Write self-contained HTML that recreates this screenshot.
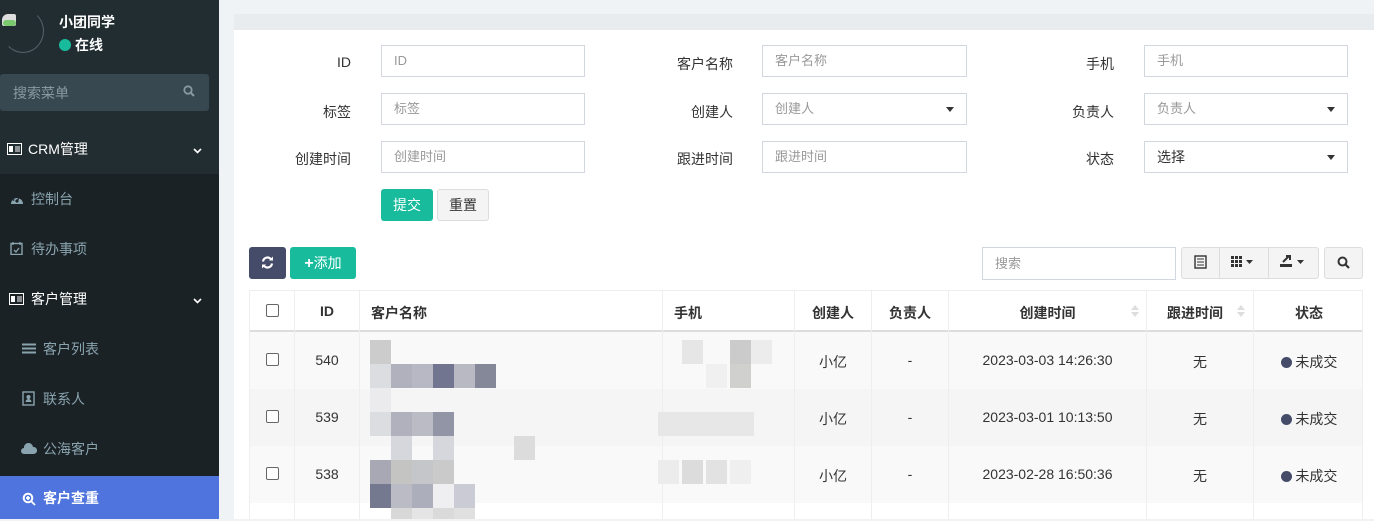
<!DOCTYPE html>
<html><head><meta charset="utf-8">
<style>
*{margin:0;padding:0;box-sizing:border-box}
body{width:1374px;height:519px;overflow:hidden;background:#f0f3f6;font-family:"Liberation Sans","Noto Sans CJK SC",sans-serif;font-size:14px;color:#333;position:relative}
.a{position:absolute}
#side{left:0;top:0;width:219px;height:519px;background:#1a2226}
.lbl{text-align:right;width:120px;font-size:14px;color:#333}
.inp{border:1px solid #d2d6de;background:#fff;height:32px;width:204px;padding:0 12px;line-height:30px;color:#999;font-size:13px}
.caret{position:absolute;right:12px;top:13px;width:0;height:0;border-left:4px solid transparent;border-right:4px solid transparent;border-top:5px solid #333}
.btn{height:32px;line-height:32px;text-align:center;border-radius:3px;font-size:14px}
.cb{width:13px;height:13px;border:1px solid #666;border-radius:2px;background:#fff;position:absolute}
.m{position:absolute;width:21px;height:24px}
.menu{position:absolute;left:0;width:219px;height:50px;line-height:50px;font-size:14px}
</style></head><body>
<div id="side" class="a">
 <div class="a" style="left:0;top:0;width:219px;height:172px;background:#222d32"></div>
 <div class="a" style="left:2px;top:9px;width:42px;height:44px;border-radius:50%;border:1px solid #55636a;border-top-color:transparent;border-left-color:transparent"></div>
 <div class="a" style="left:2px;top:14px;width:14px;height:12px;background:#ddd;border-radius:6px 2px 2px 2px"></div>
 <div class="a" style="left:3px;top:20px;width:13px;height:6px;background:#7bc96f;border-radius:3px"></div>
 <div class="a" style="left:59px;top:12px;color:#fff;font-weight:bold;font-size:14px">小团同学</div>
 <div class="a" style="left:59px;top:39px;width:12px;height:12px;border-radius:50%;background:#18bc9c"></div>
 <div class="a" style="left:75px;top:35px;color:#fff;font-weight:bold;font-size:14px">在线</div>
 <div class="a" style="left:0;top:74px;width:209px;height:37px;background:#374850;border-radius:3px"></div>
 <div class="a" style="left:13px;top:83px;color:#8a999f;font-size:14px">搜索菜单</div>
 <svg class="a" style="left:183px;top:85px" width="12" height="12" viewBox="0 0 12 12"><circle cx="5" cy="5" r="3.7" fill="none" stroke="#8a999f" stroke-width="1.8"/><path d="M8 8l3 3" stroke="#8a999f" stroke-width="2"/></svg>
 <div class="menu" style="top:124px;background:#222d32;color:#fff"><svg class="a" style="left:7px;top:19px" width="15" height="12" viewBox="0 0 15 12"><rect x=".5" y=".5" width="14" height="11" fill="none" stroke="#fff"/><rect x="2" y="3" width="4" height="6" fill="#fff"/><path d="M8 4h5M8 6h5M8 8h5" stroke="#fff"/></svg><span class="a" style="left:28px">CRM管理</span><svg class="a" style="left:193px;top:24px" width="9" height="6"><path d="M1 1l3.5 3.5L8 1" stroke="#fff" stroke-width="1.6" fill="none"/></svg></div>
 <div class="menu" style="top:174px;color:#8aa4af"><svg class="a" style="left:10px;top:19px" width="14" height="12" viewBox="0 0 14 12"><path d="M1 11A6 6 0 1 1 13 11Z" fill="#8aa4af"/><circle cx="7" cy="8" r="1.6" fill="#1a2226"/><path d="M7 8L9.5 4" stroke="#1a2226" stroke-width="1.2"/><circle cx="3.5" cy="7" r=".9" fill="#1a2226"/><circle cx="5" cy="4" r=".9" fill="#1a2226"/></svg><span class="a" style="left:31px">控制台</span></div>
 <div class="menu" style="top:224px;color:#8aa4af"><svg class="a" style="left:10px;top:17px" width="13" height="14" viewBox="0 0 13 14"><rect x="1" y="2.5" width="11" height="11" fill="none" stroke="#8aa4af" stroke-width="1.4"/><path d="M3 1v3M10 1v3M4 9l2 2 3-4" stroke="#8aa4af" stroke-width="1.3" fill="none"/></svg><span class="a" style="left:31px">待办事项</span></div>
 <div class="menu" style="top:274px;color:#fff"><svg class="a" style="left:8px;top:19px" width="17" height="12" viewBox="0 0 15 12"><rect x=".5" y=".5" width="14" height="11" fill="none" stroke="#fff"/><rect x="2" y="3" width="4" height="6" fill="#fff"/><path d="M8 4h5M8 6h5M8 8h5" stroke="#fff"/></svg><span class="a" style="left:31px">客户管理</span><svg class="a" style="left:193px;top:24px" width="9" height="6"><path d="M1 1l3.5 3.5L8 1" stroke="#fff" stroke-width="1.6" fill="none"/></svg></div>
 <div class="menu" style="top:324px;color:#8aa4af"><svg class="a" style="left:22px;top:19px" width="14" height="11"><path d="M0 1.5h14M0 5.5h14M0 9.5h14" stroke="#8aa4af" stroke-width="2"/></svg><span class="a" style="left:43px">客户列表</span></div>
 <div class="menu" style="top:374px;color:#8aa4af"><svg class="a" style="left:22px;top:17px" width="13" height="15" viewBox="0 0 13 15"><rect x="1" y="1" width="11" height="13" fill="none" stroke="#8aa4af" stroke-width="1.4"/><circle cx="6.5" cy="6" r="2" fill="#8aa4af"/><path d="M3.5 11a3 3 0 0 1 6 0z" fill="#8aa4af"/></svg><span class="a" style="left:43px">联系人</span></div>
 <div class="menu" style="top:424px;color:#8aa4af"><svg class="a" style="left:21px;top:19px" width="16" height="11" viewBox="0 0 16 11"><path d="M3 11A3 3 0 0 1 3 5A4.5 4.5 0 0 1 12 4A3.5 3.5 0 0 1 13 11Z" fill="#8aa4af"/></svg><span class="a" style="left:43px">公海客户</span></div>
 <div class="menu" style="top:476px;height:43px;line-height:45px;background:#4f74de;color:#fff"><svg class="a" style="left:22px;top:16px" width="14" height="14" viewBox="0 0 14 14"><circle cx="6" cy="6" r="4.3" fill="none" stroke="#fff" stroke-width="2"/><path d="M9 9l4 4M4 6h4M6 4v4" stroke="#fff" stroke-width="1.8"/></svg><span class="a" style="left:43px;font-weight:bold">客户查重</span></div>
</div>

<div class="a" style="left:234px;top:14px;width:1140px;height:505px;background:#fff"></div>
<div class="a" style="left:234px;top:14px;width:1140px;height:16px;background:#e8ecef"></div>

<div class="a lbl" style="left:231px;top:54px">ID</div>
<div class="a lbl" style="left:231px;top:102px">标签</div>
<div class="a lbl" style="left:231px;top:149px">创建时间</div>
<div class="a lbl" style="left:613px;top:54px">客户名称</div>
<div class="a lbl" style="left:613px;top:102px">创建人</div>
<div class="a lbl" style="left:613px;top:149px">跟进时间</div>
<div class="a lbl" style="left:994px;top:54px">手机</div>
<div class="a lbl" style="left:994px;top:102px">负责人</div>
<div class="a lbl" style="left:994px;top:149px">状态</div>
<div class="a inp" style="left:381px;top:45px">ID</div>
<div class="a inp" style="left:381px;top:93px">标签</div>
<div class="a inp" style="left:381px;top:141px">创建时间</div>
<div class="a inp" style="left:762px;top:45px;width:205px">客户名称</div>
<div class="a inp" style="left:762px;top:93px;width:205px">创建人<i class="caret"></i></div>
<div class="a inp" style="left:762px;top:141px;width:205px">跟进时间</div>
<div class="a inp" style="left:1144px;top:45px">手机</div>
<div class="a inp" style="left:1144px;top:93px">负责人<i class="caret"></i></div>
<div class="a inp" style="left:1144px;top:141px;color:#333;font-size:14px">选择<i class="caret"></i></div>
<div class="a btn" style="left:381px;top:189px;width:52px;background:#18bc9c;color:#fff">提交</div>
<div class="a btn" style="left:437px;top:189px;width:52px;background:#f4f4f4;border:1px solid #ddd;line-height:30px">重置</div>

<div class="a btn" style="left:249px;top:247px;width:37px;height:32px;background:#444c69"><svg style="margin-top:9px" width="13" height="13" viewBox="0 0 13 13"><path d="M2 5.5A4.5 4.5 0 0 1 10.5 4M11 7.5A4.5 4.5 0 0 1 2.5 9" stroke="#fff" stroke-width="2.2" fill="none"/><path d="M8 4.5h4v-4zM5 8.5H1v4z" fill="#fff"/></svg></div>
<div class="a btn" style="left:290px;top:247px;width:66px;background:#18bc9c;color:#fff;font-size:14px"><b style="font-size:16px">+</b>添加</div>
<div class="a inp" style="left:982px;top:247px;width:194px;height:33px;line-height:31px;font-size:13px">搜索</div>
<div class="a" style="left:1181px;top:247px;width:138px;height:32px;border:1px solid #ddd;background:#f4f4f4;border-radius:3px"></div>
<div class="a" style="left:1219px;top:248px;width:1px;height:30px;background:#ddd"></div>
<div class="a" style="left:1268px;top:248px;width:1px;height:30px;background:#ddd"></div>
<svg class="a" style="left:1194px;top:255px" width="13" height="14"><rect x="1" y="1" width="11" height="12" fill="none" stroke="#333" stroke-width="1.4"/><path d="M3 4h7M3 7h7M3 10h7" stroke="#333"/></svg>
<svg class="a" style="left:1231px;top:256px" width="24" height="11"><g fill="#333"><rect x="0" y="0" width="3" height="3"/><rect x="4" y="0" width="3" height="3"/><rect x="8" y="0" width="3" height="3"/><rect x="0" y="4" width="3" height="3"/><rect x="4" y="4" width="3" height="3"/><rect x="8" y="4" width="3" height="3"/><rect x="0" y="8" width="3" height="3"/><rect x="4" y="8" width="3" height="3"/><rect x="8" y="8" width="3" height="3"/><path d="M15 4h7l-3.5 4z"/></g></svg>
<svg class="a" style="left:1280px;top:254px" width="27" height="13"><g fill="#333"><rect x="0" y="10" width="12" height="3"/><path d="M3 8L9 2M6 2h4v4" stroke="#333" stroke-width="2" fill="none"/><path d="M17 6h7l-3.5 4z"/></g></svg>
<div class="a" style="left:1324px;top:247px;width:39px;height:32px;border:1px solid #ddd;background:#f4f4f4;border-radius:3px"></div>
<svg class="a" style="left:1337px;top:256px" width="13" height="13"><circle cx="5.5" cy="5.5" r="4" fill="none" stroke="#333" stroke-width="2"/><path d="M8.5 8.5l3.5 3.5" stroke="#333" stroke-width="2.2"/></svg>

<div class="a" style="left:249px;top:290px;width:1114px;height:229px;border:1px solid #eee;border-bottom:none;overflow:hidden">
 <div class="a" style="left:0;top:0;width:1114px;height:41px;background:#fff;border-bottom:2px solid #ddd"></div>
 <div class="a" style="left:0;top:41px;width:1114px;height:57px;background:#f9f9f9"></div>
 <div class="a" style="left:0;top:98px;width:1114px;height:57px;background:#f5f5f5"></div>
 <div class="a" style="left:0;top:155px;width:1114px;height:57px;background:#f9f9f9"></div>
 <div class="a" style="left:0;top:212px;width:1114px;height:20px;background:#fff"></div>
 <div class="a" style="left:44px;top:0;width:1px;height:229px;background:#eee"></div>
 <div class="a" style="left:109px;top:0;width:1px;height:229px;background:#eee"></div>
 <div class="a" style="left:412px;top:0;width:1px;height:229px;background:#eee"></div>
 <div class="a" style="left:544px;top:0;width:1px;height:229px;background:#eee"></div>
 <div class="a" style="left:621px;top:0;width:1px;height:229px;background:#eee"></div>
 <div class="a" style="left:698px;top:0;width:1px;height:229px;background:#eee"></div>
 <div class="a" style="left:896px;top:0;width:1px;height:229px;background:#eee"></div>
 <div class="a" style="left:1003px;top:0;width:1px;height:229px;background:#eee"></div>
 <div class="cb" style="left:16px;top:13px"></div>
 <div class="a" style="left:45px;width:64px;top:12px;text-align:center;font-weight:bold">ID</div>
 <div class="a" style="left:121px;top:12px;font-weight:bold">客户名称</div>
 <div class="a" style="left:424px;top:12px;font-weight:bold">手机</div>
 <div class="a" style="left:545px;width:76px;top:12px;text-align:center;font-weight:bold">创建人</div>
 <div class="a" style="left:622px;width:76px;top:12px;text-align:center;font-weight:bold">负责人</div>
 <div class="a" style="left:699px;width:197px;top:12px;text-align:center;font-weight:bold">创建时间</div>
 <div class="a" style="left:1004px;width:110px;top:12px;text-align:center;font-weight:bold">状态</div>
 <div class="a" style="left:897px;width:106px;top:12px;text-align:center;font-weight:bold;padding-right:10px">跟进时间</div>
 <svg class="a" style="left:881px;top:13px" width="8" height="14"><path d="M0 6l4-5 4 5zM0 8l4 5 4-5z" fill="#ddd"/></svg>
 <svg class="a" style="left:987px;top:13px" width="8" height="14"><path d="M0 6l4-5 4 5zM0 8l4 5 4-5z" fill="#ddd"/></svg>

 <div class="cb" style="left:16px;top:62px"></div><div class="cb" style="left:16px;top:119px"></div><div class="cb" style="left:16px;top:176px"></div>
 <div class="a" style="left:45px;width:64px;top:61px;text-align:center">540</div>
 <div class="a" style="left:45px;width:64px;top:118px;text-align:center">539</div>
 <div class="a" style="left:45px;width:64px;top:175px;text-align:center">538</div>
 <div class="a" style="left:545px;width:76px;top:61px;text-align:center">小亿</div>
 <div class="a" style="left:545px;width:76px;top:118px;text-align:center">小亿</div>
 <div class="a" style="left:545px;width:76px;top:175px;text-align:center">小亿</div>
 <div class="a" style="left:622px;width:76px;top:61px;text-align:center">-</div>
 <div class="a" style="left:622px;width:76px;top:118px;text-align:center">-</div>
 <div class="a" style="left:622px;width:76px;top:175px;text-align:center">-</div>
 <div class="a" style="left:699px;width:197px;top:61px;text-align:center">2023-03-03 14:26:30</div>
 <div class="a" style="left:699px;width:197px;top:118px;text-align:center">2023-03-01 10:13:50</div>
 <div class="a" style="left:699px;width:197px;top:175px;text-align:center">2023-02-28 16:50:36</div>
 <div class="a" style="left:897px;width:106px;top:61px;text-align:center">无</div>
 <div class="a" style="left:897px;width:106px;top:118px;text-align:center">无</div>
 <div class="a" style="left:897px;width:106px;top:175px;text-align:center">无</div>
 <div class="a" style="left:1004px;width:110px;top:61px;text-align:center"><span style="display:inline-block;width:11px;height:11px;border-radius:50%;background:#444c69;vertical-align:-1px"></span> 未成交</div>
 <div class="a" style="left:1004px;width:110px;top:118px;text-align:center"><span style="display:inline-block;width:11px;height:11px;border-radius:50%;background:#444c69;vertical-align:-1px"></span> 未成交</div>
 <div class="a" style="left:1004px;width:110px;top:175px;text-align:center"><span style="display:inline-block;width:11px;height:11px;border-radius:50%;background:#444c69;vertical-align:-1px"></span> 未成交</div>

 <div class="m" style="left:120px;top:49px;background:#ccc"></div>
 <div class="m" style="left:120px;top:73px;background:#dcdde1"></div>
 <div class="m" style="left:141px;top:73px;background:#b0b1bd"></div>
 <div class="m" style="left:162px;top:73px;background:#b7b8c3"></div>
 <div class="m" style="left:183px;top:73px;background:#71758f"></div>
 <div class="m" style="left:204px;top:73px;background:#b8b9c3"></div>
 <div class="m" style="left:225px;top:73px;background:#858898"></div>
 <div class="m" style="left:120px;top:97px;background:#ebebed"></div>
 <div class="m" style="left:120px;top:121px;background:#dcdde1"></div>
 <div class="m" style="left:141px;top:121px;background:#b0b1bd"></div>
 <div class="m" style="left:162px;top:121px;background:#babbc5"></div>
 <div class="m" style="left:183px;top:121px;background:#9295a6"></div>
 <div class="m" style="left:141px;top:145px;background:#d6d7dc"></div>
 <div class="m" style="left:183px;top:145px;background:#d6d7dc"></div>
 <div class="m" style="left:264px;top:145px;background:#dcdcdc"></div>
 <div class="m" style="left:120px;top:169px;background:#a7a8b3"></div>
 <div class="m" style="left:141px;top:169px;background:#c4c5c3"></div>
 <div class="m" style="left:162px;top:169px;background:#c5c6ca"></div>
 <div class="m" style="left:183px;top:169px;background:#c9cac9"></div>
 <div class="m" style="left:120px;top:193px;background:#75798f"></div>
 <div class="m" style="left:141px;top:193px;background:#babbc5"></div>
 <div class="m" style="left:162px;top:193px;background:#adaebb"></div>
 <div class="m" style="left:183px;top:193px;background:#efeff2"></div>
 <div class="m" style="left:204px;top:193px;background:#cacbd4"></div>
 <div class="m" style="left:141px;top:217px;background:#d8d8d8"></div>
 <div class="m" style="left:162px;top:217px;background:#e5e5e5"></div>
 <div class="m" style="left:183px;top:217px;background:#dadada"></div>
 <div class="m" style="left:204px;top:217px;background:#e0e0e0"></div>
 <div class="m" style="left:432px;top:49px;background:#e6e6e6"></div>
 <div class="m" style="left:480px;top:49px;background:#cbcbcb"></div>
 <div class="m" style="left:501px;top:49px;background:#ececec"></div>
 <div class="m" style="left:456px;top:73px;background:#f0f0f0"></div>
 <div class="m" style="left:480px;top:73px;background:#d0d0ce"></div>
 <div class="a" style="left:408px;top:121px;width:96px;height:24px;background:#e7e7e7"></div>
 <div class="m" style="left:408px;top:169px;background:#ececec"></div>
 <div class="m" style="left:432px;top:169px;background:#dcdcdc"></div>
 <div class="m" style="left:456px;top:169px;background:#e2e2e2"></div>
 <div class="m" style="left:480px;top:169px;background:#efefef"></div>
</div>
</body></html>
